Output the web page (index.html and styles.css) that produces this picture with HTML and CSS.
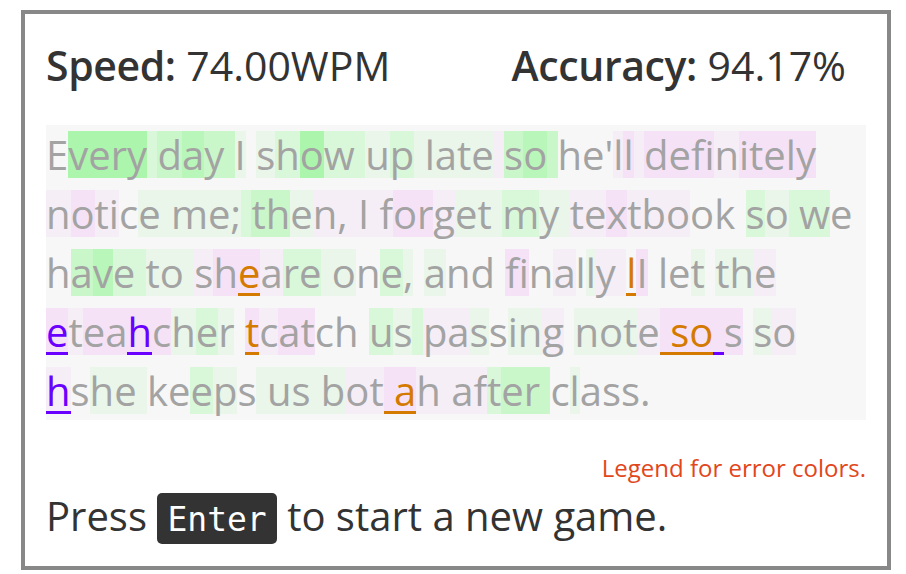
FILE: index.html
```html
<!DOCTYPE html>
<html>
<head>
<meta charset="utf-8">
<link rel="stylesheet" href="styles.css">
</head>
<body>
<div class="card">
  <div class="stats">
    <div><b>Speed:</b> 74.00WPM</div>
    <div><b>Accuracy:</b> 94.17%</div>
  </div>
  <div class="text">
    <div class="line"><span>E</span><span class="a">very</span><span class="d"> </span><span class="c">d</span><span class="b">a</span><span class="c">y </span><span class="f">I</span><span> </span><span class="f">s</span><span class="d">h</span><span class="a">o</span><span class="d">w </span><span class="f">u</span><span class="d">p</span><span class="f"> late</span><span class="q"> </span><span class="c">s</span><span class="b">o</span><span class="c"> </span><span>he'</span><span class="q">l</span><span class="p">l</span><span class="q"> </span><span class="p">defi</span><span class="q">n</span><span class="p">itely</span></div>
    <div class="line"><span class="q">n</span><span class="p">o</span><span class="q">ti</span><span>c</span><span class="f">e me;</span><span class="d"> </span><span class="c">th</span><span class="f">e</span><span class="q">n, I f</span><span class="p">or</span><span class="q">g</span><span class="f">et </span><span class="d">m</span><span class="f">y </span><span class="q">te</span><span class="p">x</span><span class="q">tbo</span><span>ok </span><span class="d">s</span><span class="f">o</span><span class="d"> w</span><span>e</span></div>
    <div class="line"><span>h</span><span class="c">a</span><span class="b">v</span><span class="d">e </span><span class="f">to </span><span class="q">s</span><span class="p">h</span><span class="p oe">e</span><span class="q">a</span><span class="d">re</span><span class="f"> o</span><span>n</span><span class="d">e</span><span class="f">,</span><span> </span><span class="f">a</span><span>nd </span><span class="p">fi</span><span>n</span><span class="q">a</span><span>l</span><span class="f">l</span><span class="q">y </span><span class="oe">l</span><span class="p">I</span><span> le</span><span class="f">t</span><span> </span><span class="f">th</span><span class="q">e</span></div>
    <div class="line"><span class="p pe">e</span><span class="q">t</span><span class="p">ea</span><span class="p pe">h</span><span class="p">c</span><span class="f">h</span><span class="d">e</span><span class="f">r</span><span> </span><span class="p oe">t</span><span class="q">c</span><span class="p">at</span><span>ch </span><span class="d">u</span><span class="f">s</span><span class="d"> </span><span class="q">pa</span><span class="f">s</span><span>s</span><span class="f">in</span><span class="q">g</span><span> </span><span class="f">not</span><span class="q">e</span><span class="p oe"> so</span><span class="p pe"> </span><span class="p">s</span><span> </span><span class="f">s</span><span class="q">o</span></div>
    <div class="line"><span class="q pe">h</span><span>s</span><span class="f">he </span><span>ke</span><span class="d">e</span><span class="f">p</span><span>s</span><span class="f"> us b</span><span class="q">ot</span><span class="p oe"> a</span><span class="q">h af</span><span class="d">t</span><span class="c">er </span><span>c</span><span class="f">l</span><span>ass.</span></div>
  </div>
  <div class="legend">Legend for error colors.</div>
  <div class="press">Press <kbd>Enter</kbd> to start a new game.</div>
</div>
</body>
</html>
```
FILE: styles.css
```css
body {
  margin: 0;
  background: #fff;
  font-family: "Open Sans", "DejaVu Sans", sans-serif;
}
.card {
  box-sizing: border-box;
  width: 870px;
  height: 560px;
  margin: 10px 0 0 21px;
  border: 4px solid #888;
  padding: 26px 21px 0;
}
.stats {
  display: flex;
  justify-content: space-between;
  padding-right: 20px;
  font-size: 41px;
  line-height: 50px;
  color: #333;
}
.stats b {
  font-weight: 600;
  letter-spacing: -0.4px;
}
.text {
  margin-top: 35px;
  height: 295px;
  background: #f7f7f7;
  font-size: 40px;
  color: #a3a3a3;
}
.line {
  box-sizing: border-box;
  display: flex;
  height: 59px;
  padding-top: 6px;
}
.line span {
  display: block;
  height: 47px;
  line-height: 47px;
  white-space: pre;
}
.a { background: #acf5ac; }
.b { background: #b9f6b9; }
.c { background: #caf7ca; }
.d { background: #d9f8d9; }
.f { background: #e9f6e9; }
.p { background: #f6e2f6; }
.q { background: #f6eef6; }
.line .oe {
  color: #d47a00;
  box-shadow: inset 0 -3px 0 #d47a00;
}
.line .pe {
  color: #6a00ff;
  box-shadow: inset 0 -3px 0 #6a00ff;
}
.legend {
  margin-top: 33px;
  text-align: right;
  font-size: 24px;
  line-height: 30px;
  color: #e2461b;
}
.press {
  margin-top: 3px;
  font-size: 40px;
  line-height: 60px;
  color: #333;
}
kbd {
  display: inline-block;
  background: #333;
  color: #fff;
  border-radius: 5px;
  font-family: "DejaVu Sans Mono", monospace;
  font-size: 33px;
  line-height: 41px;
  padding: 6px 10px 4px;
}
```
